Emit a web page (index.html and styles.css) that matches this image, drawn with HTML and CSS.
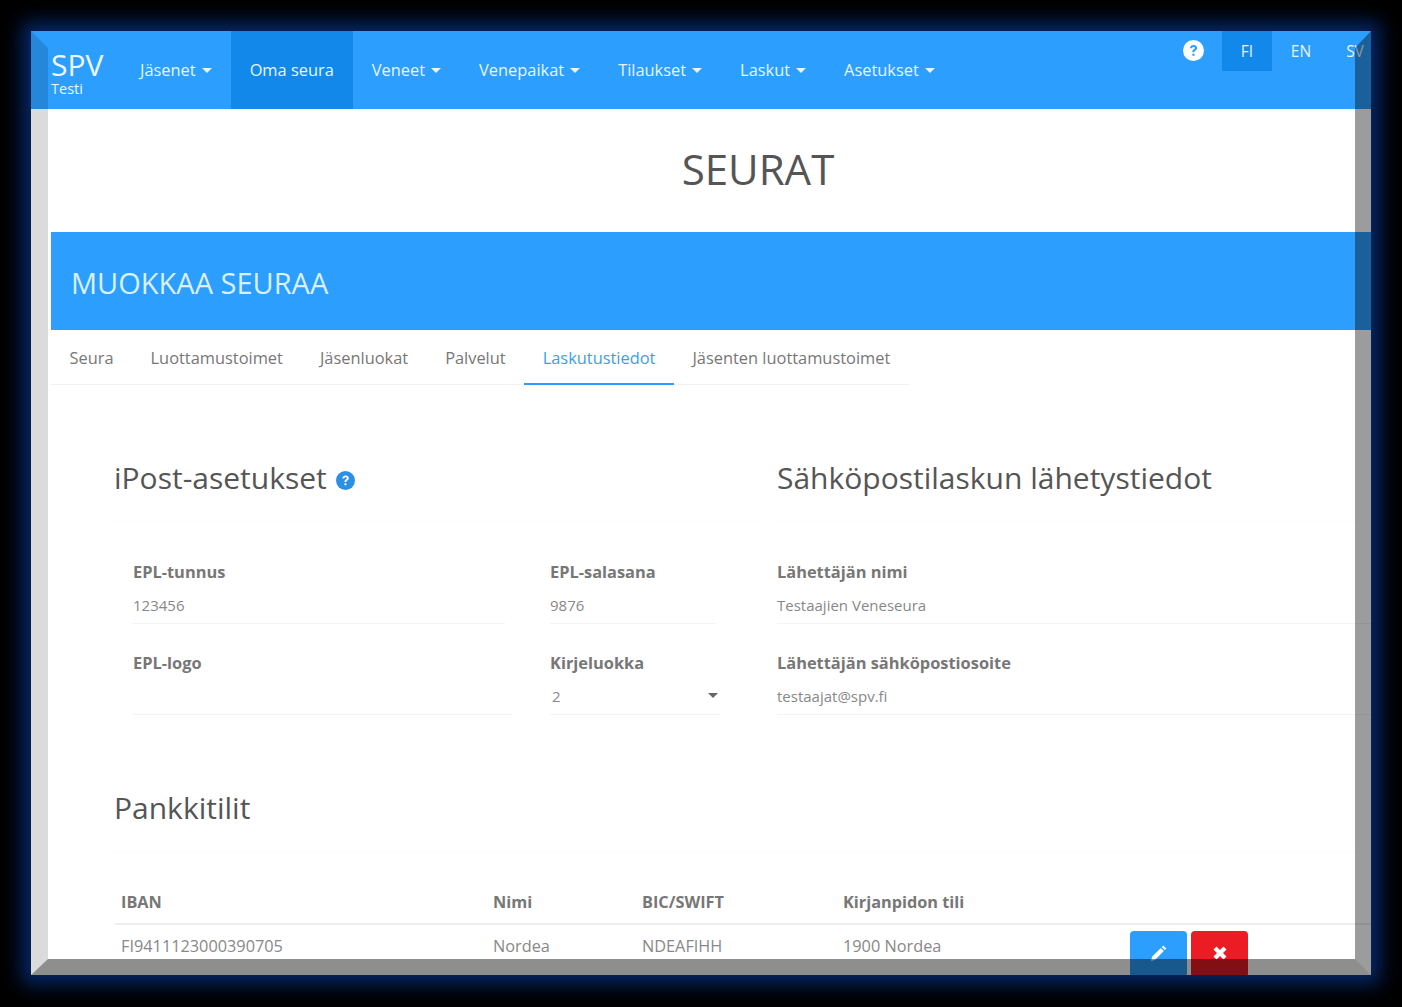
FILE: index.html
```html
<!DOCTYPE html>
<html lang="fi">
<head>
<meta charset="utf-8">
<title>Seurat</title>
<link rel="stylesheet" href="styles.css">
</head>
<body>
<div class="frame">
  <header class="nav">
    <a class="brand"><span class="brand-name">SPV</span><span class="brand-sub">Testi</span></a>
    <a class="nav-item">Jäsenet <i class="caret"></i></a>
    <a class="nav-item active">Oma seura</a>
    <a class="nav-item">Veneet <i class="caret"></i></a>
    <a class="nav-item">Venepaikat <i class="caret"></i></a>
    <a class="nav-item">Tilaukset <i class="caret"></i></a>
    <a class="nav-item">Laskut <i class="caret"></i></a>
    <a class="nav-item">Asetukset <i class="caret"></i></a>
    <div class="nav-right">
      <svg class="help-icon" viewBox="0 0 24 24" aria-hidden="true"><circle cx="12" cy="12" r="12" fill="#fff"/><path d="M8 9.400c.2-2.400 1.900-3.600 4.100-3.600 2.300 0 4 1.300 4 3.300 0 1.500-.8 2.300-1.900 3-.9.6-1.100.9-1.100 1.800h-2.400c0-1.700.5-2.400 1.600-3.200.9-.6 1.300-1 1.300-1.600 0-.7-.6-1.200-1.500-1.200-1 0-1.600.6-1.700 1.500zM10.700 15.600h2.500v2.500h-2.500z" fill="#2b9efe"/></svg>
      <a class="lang active">FI</a>
      <a class="lang">EN</a>
      <a class="lang">SV</a>
    </div>
  </header>

  <main class="main">
    <h1 class="page-title">SEURAT</h1>
    <div class="banner">MUOKKAA SEURAA</div>
    <nav class="tabs">
      <a class="tab">Seura</a>
      <a class="tab">Luottamustoimet</a>
      <a class="tab">Jäsenluokat</a>
      <a class="tab">Palvelut</a>
      <a class="tab current">Laskutustiedot</a>
      <a class="tab">Jäsenten luottamustoimet</a>
    </nav>

    <section class="content">
      <div class="columns">
        <div class="col">
          <h2 class="heading heading-left">iPost-asetukset <svg class="heading-icon" viewBox="0 0 24 24" aria-hidden="true"><circle cx="12" cy="12" r="12" fill="#2b8fe6"/><path d="M8 9.400c.2-2.400 1.900-3.600 4.100-3.600 2.300 0 4 1.300 4 3.300 0 1.500-.8 2.300-1.900 3-.9.6-1.100.9-1.100 1.800h-2.400c0-1.700.5-2.400 1.600-3.200.9-.6 1.300-1 1.300-1.600 0-.7-.6-1.200-1.500-1.200-1 0-1.600.6-1.700 1.500zM10.700 15.600h2.500v2.500h-2.500z" fill="#fff"/></svg></h2>
          <div class="fields fields-left">
            <div class="field"><label class="label">EPL-tunnus</label><div class="value short">123456</div></div>
            <div class="field"><label class="label">EPL-salasana</label><div class="value narrow">9876</div></div>
            <div class="field"><label class="label">EPL-logo</label><div class="value"></div></div>
            <div class="field"><label class="label">Kirjeluokka</label><div class="value select"><span>2</span><i class="select-caret"></i></div></div>
          </div>
        </div>
        <div class="col">
          <h2 class="heading">Sähköpostilaskun lähetystiedot</h2>
          <div class="fields fields-right">
            <div class="field"><label class="label">Lähettäjän nimi</label><div class="value">Testaajien Veneseura</div></div>
            <div class="field"><label class="label">Lähettäjän sähköpostiosoite</label><div class="value">testaajat@spv.fi</div></div>
          </div>
        </div>
      </div>

      <h2 class="heading accounts">Pankkitilit</h2>
      <table class="table">
        <thead>
          <tr><th class="c-iban">IBAN</th><th class="c-name">Nimi</th><th class="c-bic">BIC/SWIFT</th><th class="c-acc">Kirjanpidon tili</th><th></th></tr>
        </thead>
        <tbody>
          <tr>
            <td>FI9411123000390705</td><td>Nordea</td><td>NDEAFIHH</td><td>1900 Nordea</td>
            <td class="actions">
              <a class="btn btn-edit"><svg viewBox="0 0 18 18" aria-hidden="true"><path d="M1 17l1.200-4.400L10.800 4l3 3-8.600 8.800zM11.800 3l1.600-1.600 3 3L14.800 6z" fill="#fff"/></svg></a>
              <a class="btn btn-delete"><svg viewBox="0 0 18 18" aria-hidden="true"><path d="M2.500 5.500 5.500 2.500 9 6 12.500 2.500 15.500 5.500 12 9 15.500 12.500 12.500 15.500 9 12 5.500 15.500 2.500 12.500 6 9z" fill="#fff"/></svg></a>
            </td>
          </tr>
        </tbody>
      </table>
    </section>
  </main>

  <div class="bevel"></div>
</div>
</body>
</html>
```
FILE: styles.css
```css
* { box-sizing: border-box; }

html, body {
  margin: 0;
  height: 100%;
  background: #000;
  overflow: hidden;
}

body {
  padding: 31px;
  font-family: "Open Sans", "Liberation Sans", sans-serif;
  color: #666;
}

/* Navy glow behind the picture frame */
body::before {
  content: "";
  position: fixed;
  left: 31px;
  top: 31px;
  width: 1340px;
  height: 944px;
  box-shadow: 0 0 18px 9px #05286a;
}

.frame {
  position: relative;
  width: 1340px;
  height: 944px;
  background: #fff;
  overflow: hidden;
}

/* Mitred edges drawn over the page */
.bevel {
  position: absolute;
  inset: 0;
  pointer-events: none;
  border-style: solid;
  border-width: 17px 16px 16px 17px;
  border-color: transparent rgba(0, 0, 0, .39) rgba(0, 0, 0, .44) rgba(0, 0, 0, .14);
}

/* Top navigation */
.nav {
  display: flex;
  align-items: stretch;
  height: 78px;
  background: #2b9efe;
  color: #e6f5ff;
  font-size: 16.4px;
}

.brand {
  display: flex;
  flex-direction: column;
  width: 70px;
  margin-left: 20px;
  padding-top: 17px;
  color: #eef8ff;
}

.brand-name {
  font-size: 30px;
  line-height: 34px;
}

.brand-sub {
  font-size: 14.5px;
  line-height: 14px;
}

.nav-item {
  display: flex;
  align-items: center;
  gap: 6px;
  padding: 0 19px 2px;
  white-space: nowrap;
}

.nav-item.active {
  background: #1289ea;
}

.caret {
  display: block;
  width: 0;
  height: 0;
  margin-top: 3px;
  border: 5px solid transparent;
  border-top-color: currentColor;
  border-bottom-width: 0;
}

.nav-right {
  display: flex;
  align-items: stretch;
  height: 40px;
  margin-left: auto;
  margin-right: -9px;
}

.help-icon {
  align-self: flex-start;
  width: 21px;
  height: 21px;
  margin: 9px 18px 0 0;
}

.lang {
  display: flex;
  align-items: center;
  justify-content: center;
  width: 50px;
  padding-bottom: 1px;
  font-size: 15.5px;
}

.lang + .lang {
  margin-left: 4px;
}

.lang.active {
  background: #1289ea;
}

/* Page body */
.main {
  padding-left: 20px;
}

.page-title {
  margin: 0;
  height: 123px;
  padding-top: 35px;
  padding-left: 94px;
  font-size: 42px;
  font-weight: 400;
  line-height: 50px;
  text-align: center;
  color: #555;
}

.banner {
  height: 98px;
  padding-left: 20px;
  background: #2b9efe;
  color: #d8f0ff;
  font-size: 29px;
  line-height: 102px;
}

.tabs {
  display: inline-flex;
  vertical-align: top;
  height: 55px;
  border-bottom: 1px solid #f2f2f2;
}

.tab {
  padding: 0 18.500px;
  font-size: 16.4px;
  line-height: 56px;
  color: #777;
  white-space: nowrap;
}

.tab:first-child {
  padding-left: 18.500px;
}

.tab.current {
  color: #3a9fe8;
  border-bottom: 2px solid #2b9efe;
  height: 55px;
}

.content {
  padding: 73px 0 0 64px;
}

.columns {
  display: grid;
  grid-template-columns: 662px 1fr;
}

/* Section headings carry a very faint rule below them */
.heading {
  margin: 0;
  padding-bottom: 23px;
  border-bottom: 1px solid #fcfcfc;
  font-size: 30px;
  font-weight: 400;
  line-height: 40px;
  color: #555;
}

.heading-left {
  margin: 0 15px 0 -1px;
}

.heading-icon {
  width: 19px;
  height: 19px;
  margin-left: 1px;
  vertical-align: -1px;
}

.fields {
  display: grid;
  row-gap: 29px;
  margin-top: 40px;
}

.fields-left {
  grid-template-columns: 417px 170px;
  padding-left: 18px;
}

.fields-right {
  grid-template-columns: 1fr;
}

.label {
  display: block;
  font-size: 16.4px;
  font-weight: 700;
  line-height: 20px;
  color: #777;
}

.value {
  height: 34px;
  margin-top: 8px;
  border-bottom: 1px solid #f3f3f3;
  font-size: 15px;
  line-height: 30px;
  color: #888;
}

.value.short { margin-right: 45px; }
.value.narrow { margin-right: 5px; }

.fields-left .field:nth-child(3) .value { margin-right: 38px; }

.select {
  display: flex;
  align-items: flex-start;
  justify-content: space-between;
  padding-left: 2px;
}

.select-caret {
  display: block;
  width: 0;
  height: 0;
  margin: 12px 2px 0 0;
  border: 5px solid transparent;
  border-top-color: #666;
  border-bottom-width: 0;
}

.accounts {
  margin: 73px 0 0 -1px;
}

/* Bank accounts */
.table {
  width: 100%;
  margin-top: 28px;
  border-collapse: collapse;
  table-layout: fixed;
  font-size: 16.3px;
}

.table th {
  height: 44px;
  padding: 0 6px;
  border-bottom: 2px solid #eee;
  font-size: 16.3px;
  font-weight: 700;
  text-align: left;
  color: #777;
}

.c-iban { width: 372px; }
.c-name { width: 149px; }
.c-bic { width: 201px; }
.c-acc { width: 293px; }

.table td {
  height: 44px;
  padding: 0 6px 2px;
  color: #888;
  vertical-align: middle;
}

.table td.actions {
  display: flex;
  gap: 4px;
  padding: 6px 0 0 0;
}

.btn {
  display: flex;
  justify-content: center;
  width: 57px;
  height: 46px;
  padding-top: 13px;
  border-radius: 4px;
}

.btn svg {
  width: 18px;
  height: 18px;
}

.btn-edit { background: #2b9efe; }
.btn-delete { background: #ec1c24; }
```
